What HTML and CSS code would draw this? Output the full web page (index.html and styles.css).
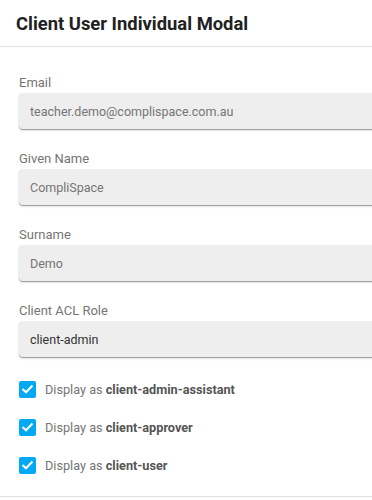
FILE: index.html
```html
<!DOCTYPE html>
<html lang="en">
<head>
    <meta charset="UTF-8">
    <meta name="viewport" content="width=device-width, initial-scale=1.0">
    <title>Client User Individual Modal</title>
    <link rel="stylesheet" href="styles.css">
</head>
<body>
    <div class="modal">
        <div class="modal-header">
            <h2>Client User Individual Modal</h2>
        </div>

        <div class="modal-body">
            <div class="form-group">
                <label for="email">Email</label>
                <input type="text" id="email" class="disabled" value="teacher.demo@complispace.com.au" readonly>
            </div>

            <div class="form-group">
                <label for="givenName">Given Name</label>
                <input type="text" id="givenName" class="disabled" value="CompliSpace" readonly>
            </div>

            <div class="form-group">
                <label for="surname">Surname</label>
                <input type="text" id="surname" class="disabled" value="Demo" readonly>
            </div>

            <div class="form-group">
                <label for="role">Client ACL Role</label>
                <input type="text" id="role" value="client-admin">
            </div>

            <div class="check-list">
                <div class="check-row">
                    <span class="check-box">
                        <svg width="13" height="10" viewBox="0 0 13 10"><path d="M1.5 5 L5 8.3 L11.5 1.5" fill="none" stroke="#fff" stroke-width="2"/></svg>
                    </span>
                    <span class="check-label">Display as <b>client-admin-assistant</b></span>
                </div>
                <div class="check-row">
                    <span class="check-box">
                        <svg width="13" height="10" viewBox="0 0 13 10"><path d="M1.5 5 L5 8.3 L11.5 1.5" fill="none" stroke="#fff" stroke-width="2"/></svg>
                    </span>
                    <span class="check-label">Display as <b>client-approver</b></span>
                </div>
                <div class="check-row">
                    <span class="check-box">
                        <svg width="13" height="10" viewBox="0 0 13 10"><path d="M1.5 5 L5 8.3 L11.5 1.5" fill="none" stroke="#fff" stroke-width="2"/></svg>
                    </span>
                    <span class="check-label">Display as <b>client-user</b></span>
                </div>
            </div>
        </div>

        <div class="modal-footer"></div>
    </div>
</body>
</html>
```

FILE: styles.css
```css
:root {
    --text-dark: #212121;
    --text-muted: #757575;
    --field-bg: #eeeeee;
    --divider: #e0e0e0;
    --accent: #03a9f4;
}

body {
    font-family: Roboto, "Liberation Sans", Arial, sans-serif;
    background-color: #ffffff;
    margin: 0;
    overflow: hidden;
}

.modal {
    width: 600px;
}

.modal-header {
    height: 46px;
    padding: 0 16px;
    display: flex;
    align-items: center;
    border-bottom: 1px solid var(--divider);
}

.modal-header h2 {
    margin: 0;
    font-size: 18.4px;
    font-weight: 700;
    color: var(--text-dark);
}

.modal-body {
    padding: 28px 19px 21px;
}

.form-group {
    display: flex;
    flex-direction: column;
    margin-bottom: 22px;
}

label {
    font-size: 13px;
    line-height: 16px;
    color: var(--text-muted);
    margin-bottom: 2px;
}

input {
    height: 36px;
    padding: 0 11px;
    border: none;
    border-radius: 4px;
    background-color: var(--field-bg);
    box-shadow: 0 1px 1px rgba(0, 0, 0, 0.35), 0 2px 3px rgba(0, 0, 0, 0.08);
    font-family: inherit;
    font-size: 12.5px;
    color: #333333;
    box-sizing: border-box;
    outline: none;
}

input.disabled {
    color: var(--text-muted);
}

.check-list {
    display: flex;
    flex-direction: column;
    gap: 18px;
}

.check-row {
    display: flex;
    align-items: center;
    height: 20px;
}

.check-box {
    width: 17px;
    height: 17px;
    border-radius: 2px;
    background-color: var(--accent);
    display: flex;
    align-items: center;
    justify-content: center;
    margin-right: 9px;
}

.check-label {
    font-size: 12.7px;
    color: var(--text-muted);
}

.check-label b {
    color: #555555;
    font-weight: 700;
}

.modal-footer {
    border-top: 1px solid var(--divider);
    height: 10px;
}
```
